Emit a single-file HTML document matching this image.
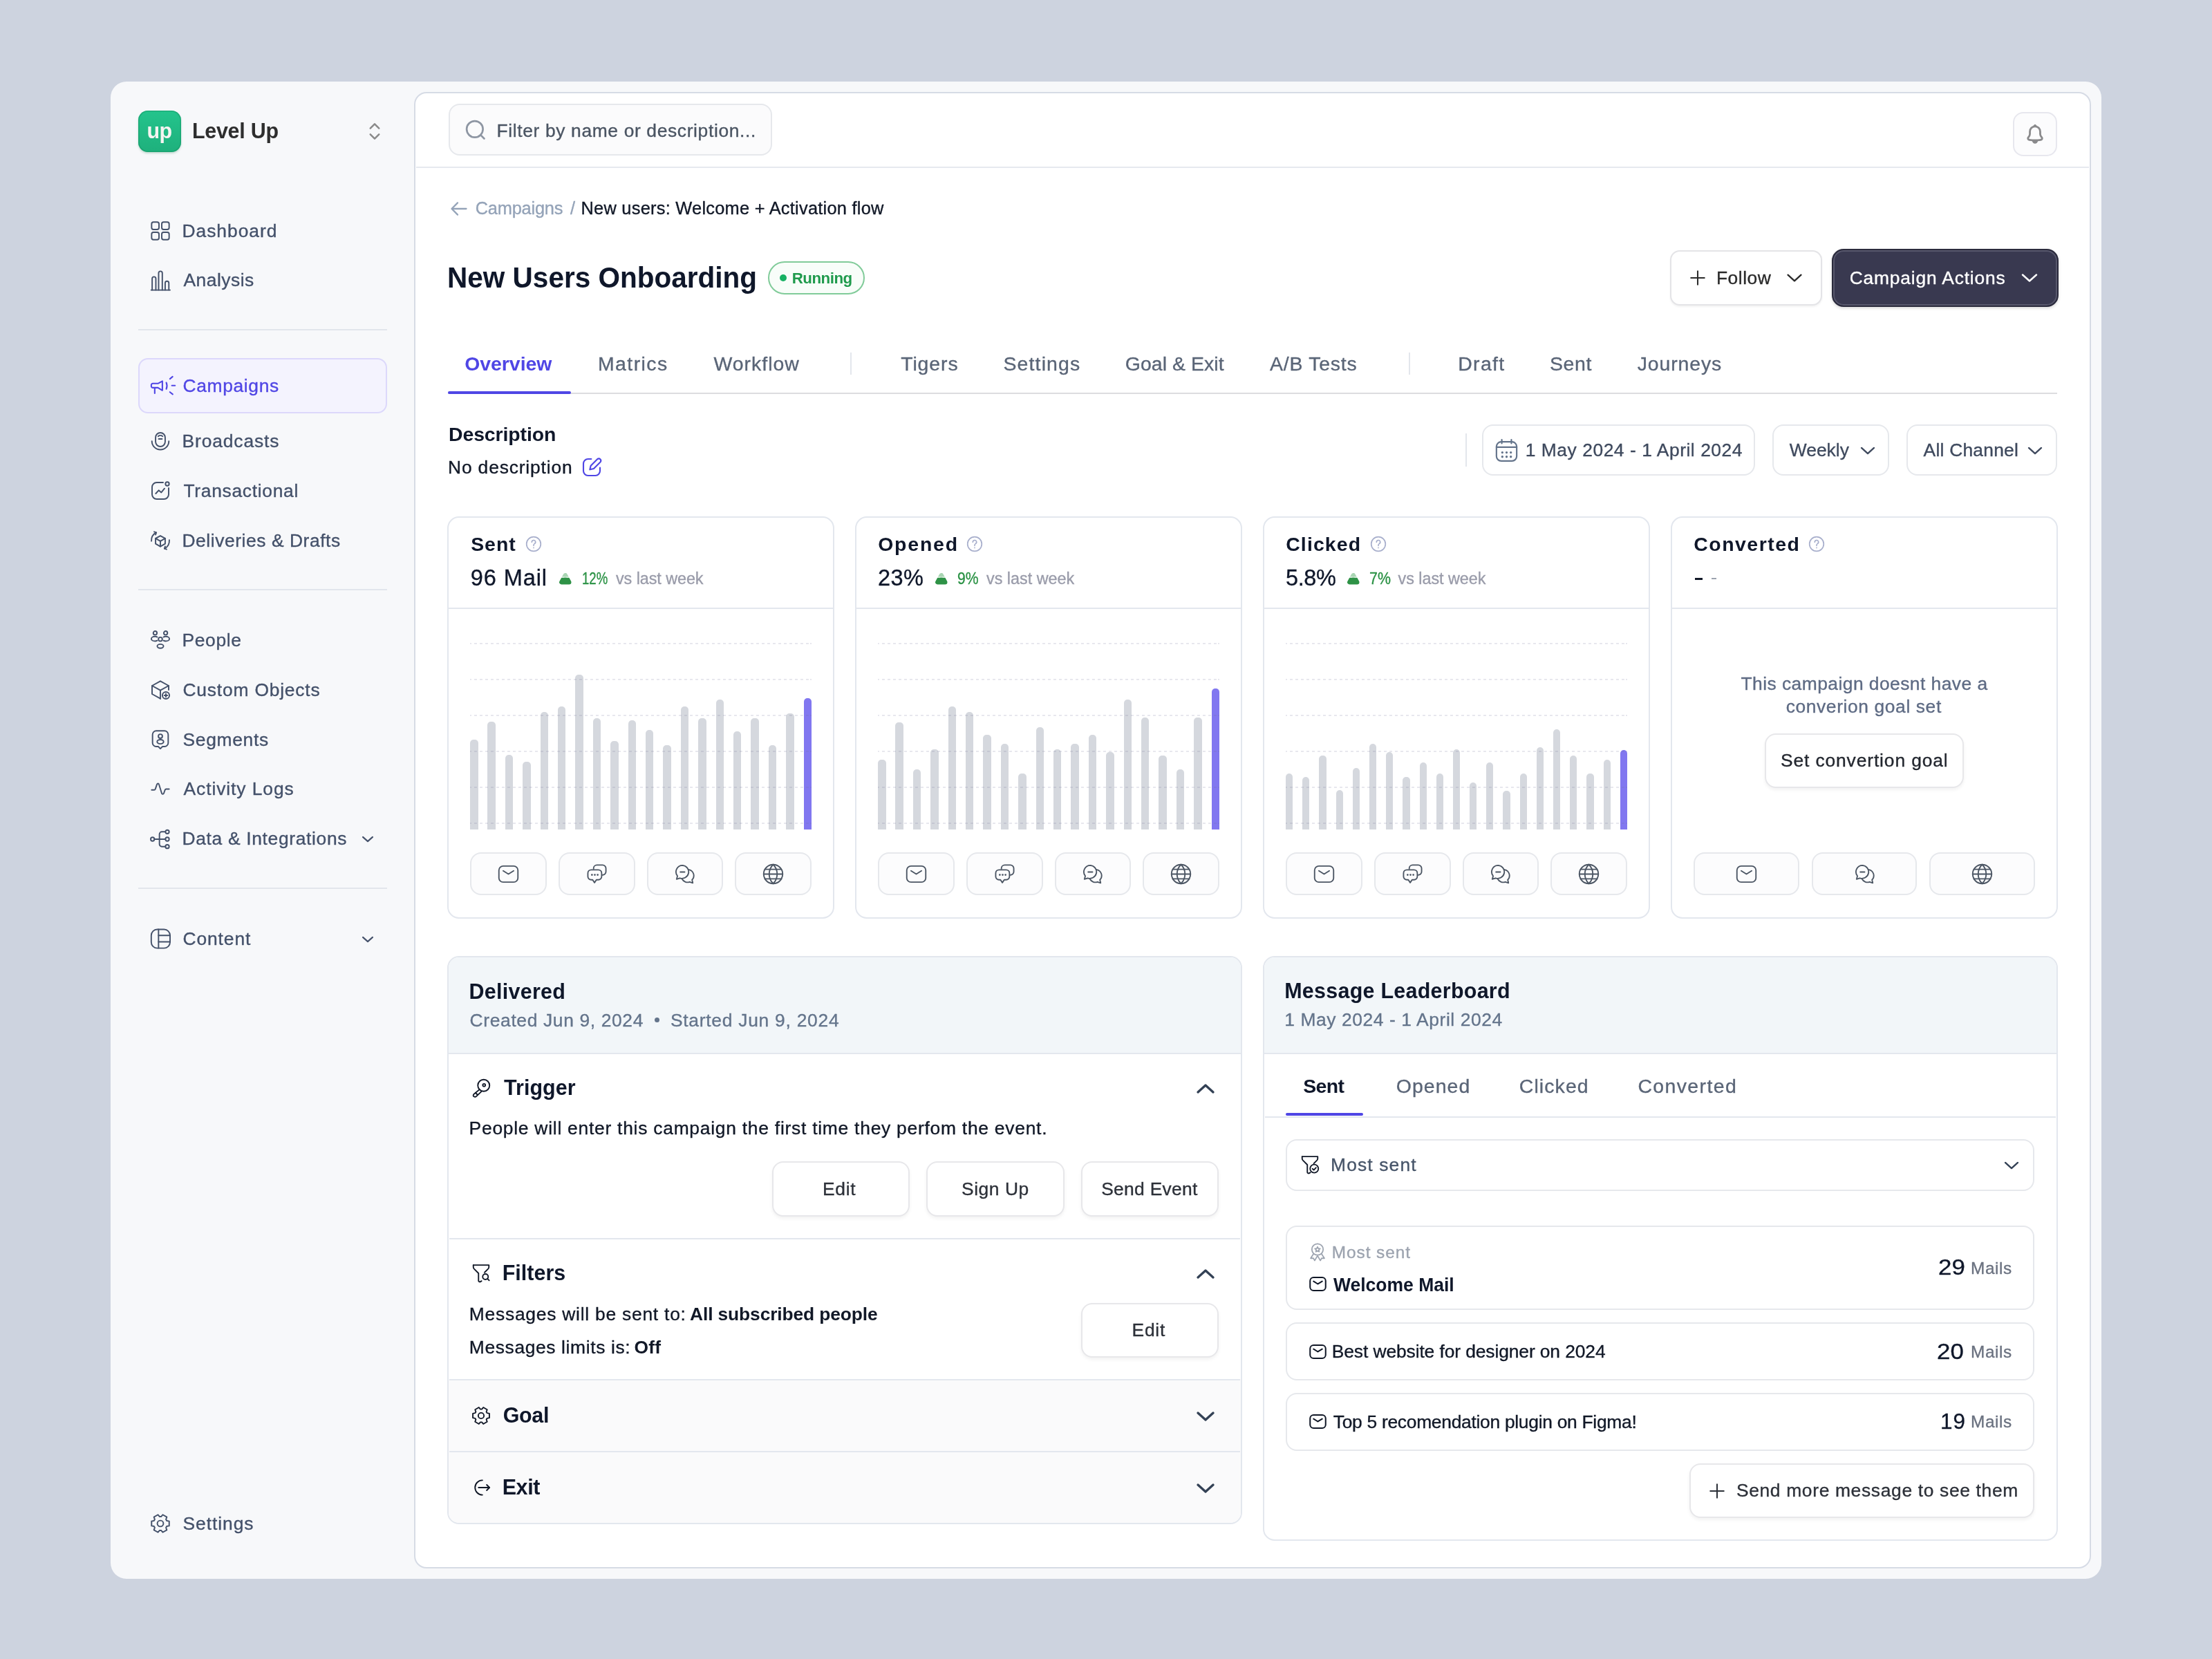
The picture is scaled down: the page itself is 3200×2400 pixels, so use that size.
<!DOCTYPE html><html><head><meta charset="utf-8"><style>html,body{margin:0;padding:0;}
body{width:3200px;height:2400px;background:#cdd3df;position:relative;overflow:hidden;font-family:"Liberation Sans",sans-serif;}
.a{position:absolute;}
.t{white-space:nowrap;-webkit-text-stroke:0.35px currentColor;}
.t[style*="font-weight:700"]{-webkit-text-stroke:0;}
svg.a{overflow:visible;}
#root{position:absolute;left:0;top:0;width:3200px;height:2400px;will-change:transform;}</style></head><body><div id="root">
<div class="a" style="left:160.00px;top:118.00px;width:2880.00px;height:2166.00px;background:#f7f8fa;border-radius:23px;"></div>
<div class="a" style="left:200.00px;top:160.00px;width:62.00px;height:60.00px;background:linear-gradient(#24c48c,#1eb07c);border-radius:14px;box-shadow:0 2px 3px rgba(16,110,70,.22), inset 0 0 0 1.5px rgba(20,150,100,.5);"></div>
<div class="a t" style="left:212.60px;top:171.36px;font-size:30.46px;line-height:36.55px;color:#f6f4f1;font-weight:700;letter-spacing:-0.702px;">up</div>
<div class="a t" style="left:277.90px;top:171.16px;font-size:30.46px;line-height:36.55px;color:#2e2e2e;font-weight:700;letter-spacing:-0.247px;">Level Up</div>
<svg class="a" style="left:527.00px;top:174.50px;" width="30" height="30" viewBox="0 0 24 24" fill="none" stroke="#8a8a8a" stroke-width="2.0" stroke-linecap="round" stroke-linejoin="round"><path d="M7 8.5l5-5 5 5"/><path d="M7 15.5l5 5 5-5"/></svg>
<div class="a" style="left:200.00px;top:476.00px;width:360.00px;height:2.00px;background:#e2e6ec;"></div>
<div class="a" style="left:200.00px;top:851.50px;width:360.00px;height:2.00px;background:#e2e6ec;"></div>
<div class="a" style="left:200.00px;top:1284.00px;width:360.00px;height:2.00px;background:#e2e6ec;"></div>
<div class="a" style="left:200.00px;top:518.00px;width:360.00px;height:80.00px;background:#f4f3fe;border:2px solid #dcd8fb;border-radius:14px;box-sizing:border-box;"></div>
<svg class="a" style="left:215.75px;top:317.75px;" width="32" height="32" viewBox="0 0 24 24" fill="none" stroke="#44516a" stroke-width="1.45" stroke-linecap="round" stroke-linejoin="round"><rect x="2.5" y="2.5" width="8" height="8" rx="2"/><rect x="13.5" y="2.5" width="8" height="8" rx="2"/><rect x="2.5" y="13.5" width="8" height="8" rx="2"/><rect x="13.5" y="13.5" width="8" height="8" rx="2"/></svg>
<div class="a t" style="left:263.50px;top:318.91px;font-size:26.4px;line-height:31.68px;color:#44516a;letter-spacing:0.978px;">Dashboard</div>
<svg class="a" style="left:215.75px;top:389.50px;" width="32" height="32" viewBox="0 0 24 24" fill="none" stroke="#44516a" stroke-width="1.45" stroke-linecap="round" stroke-linejoin="round"><path d="M2 22.2h20.5"/><path d="M3.1 22.2V9.8a2 2 0 0 1 4 0v12.4"/><path d="M10.1 22.2V3.8a2 2 0 0 1 4 0v18.4"/><path d="M17.2 22.2v-7.6a2 2 0 0 1 4 0v7.6"/></svg>
<div class="a t" style="left:265.50px;top:390.01px;font-size:26.4px;line-height:31.68px;color:#44516a;letter-spacing:0.489px;">Analysis</div>
<svg class="a" style="left:217.00px;top:539.00px;" width="37" height="37" viewBox="0 0 24 24" fill="none" stroke="#5046e5" stroke-width="1.36" stroke-linecap="round" stroke-linejoin="round"><path d="M2.6 10.25H7.46L11.6 8v8.74l-4.14-2.54H2.6a1.4 1.4 0 0 1-1.4-1.4v-1.15a1.4 1.4 0 0 1 1.4-1.4z"/><path d="M4.44 14.3v5.1"/><path d="M15.3 9.4q1.3 2.95 0 6"/><path d="M18.7 5.9l2.5-2.1"/><path d="M20.5 12.2h3"/><path d="M18.7 18.3l2.6 2"/></svg>
<div class="a t" style="left:264.50px;top:542.51px;font-size:26.4px;line-height:31.68px;color:#5046e5;letter-spacing:0.651px;">Campaigns</div>
<svg class="a" style="left:215.75px;top:622.00px;" width="32" height="32" viewBox="0 0 24 24" fill="none" stroke="#44516a" stroke-width="1.45" stroke-linecap="round" stroke-linejoin="round"><path d="M6.8 8.2a5.2 5.2 0 0 1 10.4 0v4.6a5.2 5.2 0 0 1-10.4 0z"/><path d="M2.8 12.2a9.2 9.2 0 0 0 18.4 0"/><path d="M9.6 6.9a3.6 3.6 0 0 1 4.8 0"/><path d="M10.2 9.8h3.6"/></svg>
<div class="a t" style="left:263.50px;top:623.01px;font-size:26.4px;line-height:31.68px;color:#44516a;letter-spacing:0.881px;">Broadcasts</div>
<svg class="a" style="left:215.75px;top:694.25px;" width="32" height="32" viewBox="0 0 24 24" fill="none" stroke="#44516a" stroke-width="1.45" stroke-linecap="round" stroke-linejoin="round"><path d="M15 3H8a5 5 0 0 0-5 5v8a5 5 0 0 0 5 5h8a5 5 0 0 0 5-5V9"/><circle cx="19.5" cy="4.5" r="2"/><path d="M7 15l3.2-3.5 2.8 2.3 3.5-4.3"/></svg>
<div class="a t" style="left:265.50px;top:695.01px;font-size:26.4px;line-height:31.68px;color:#44516a;letter-spacing:0.702px;">Transactional</div>
<svg class="a" style="left:215.75px;top:765.90px;" width="32" height="32" viewBox="0 0 24 24" fill="none" stroke="#44516a" stroke-width="1.45" stroke-linecap="round" stroke-linejoin="round"><path d="M12 6.8l5.2 2.9v5.8L12 18.4l-5.2-2.9V9.7z"/><path d="M6.8 9.7l5.2 2.9 5.2-2.9"/><path d="M12 12.6v5.8"/><path d="M2.3 12.5A9.7 9.7 0 0 1 7.5 3.3"/><path d="M5.3 2.5l2.3.8-.8 2.3"/><path d="M21.7 11.5a9.7 9.7 0 0 1-5.2 9.2"/><path d="M18.7 21.5l-2.3-.8.8-2.3"/></svg>
<div class="a t" style="left:263.50px;top:766.76px;font-size:26.4px;line-height:31.68px;color:#44516a;letter-spacing:0.566px;">Deliveries &amp; Drafts</div>
<svg class="a" style="left:215.75px;top:909.60px;" width="32" height="32" viewBox="0 0 24 24" fill="none" stroke="#44516a" stroke-width="1.45" stroke-linecap="round" stroke-linejoin="round"><circle cx="12" cy="11" r="2.1"/><ellipse cx="12" cy="18.6" rx="3.4" ry="2.2"/><circle cx="6.3" cy="4.3" r="2"/><circle cx="17.7" cy="4.3" r="2"/><path d="M8.6 8.7c-.7-.4-1.5-.6-2.4-.6-2.2 0-4 1.1-4 2.5s1.8 2.5 4 2.5c.9 0 1.7-.2 2.4-.6"/><path d="M15.4 8.7c.7-.4 1.5-.6 2.4-.6 2.2 0 4 1.1 4 2.5s-1.8 2.5-4 2.5c-.9 0-1.7-.2-2.4-.6"/></svg>
<div class="a t" style="left:263.50px;top:911.01px;font-size:26.4px;line-height:31.68px;color:#44516a;letter-spacing:0.651px;">People</div>
<svg class="a" style="left:215.75px;top:982.10px;" width="32" height="32" viewBox="0 0 24 24" fill="none" stroke="#44516a" stroke-width="1.45" stroke-linecap="round" stroke-linejoin="round"><path d="M21 12V7.5L12 2.5 3 7.5v9l9 5"/><path d="M3 7.5l9 5 9-5"/><path d="M12 12.5V21.5"/><circle cx="18" cy="18" r="3.8"/><path d="M18 16.3v3.4M16.3 18h3.4"/></svg>
<div class="a t" style="left:264.50px;top:983.01px;font-size:26.4px;line-height:31.68px;color:#44516a;letter-spacing:0.805px;">Custom Objects</div>
<svg class="a" style="left:215.75px;top:1053.60px;" width="32" height="32" viewBox="0 0 24 24" fill="none" stroke="#44516a" stroke-width="1.45" stroke-linecap="round" stroke-linejoin="round"><path d="M3.5 6.5a4 4 0 0 1 4-4h9a4 4 0 0 1 4 4v9a4 4 0 0 1-4 4h-2.2L12 21.8 9.7 19.5H7.5a4 4 0 0 1-4-4z"/><circle cx="12" cy="8.3" r="2.2"/><ellipse cx="12" cy="14.3" rx="3.5" ry="2.3"/></svg>
<div class="a t" style="left:264.50px;top:1054.51px;font-size:26.4px;line-height:31.68px;color:#44516a;letter-spacing:0.696px;">Segments</div>
<svg class="a" style="left:215.75px;top:1125.90px;" width="32" height="32" viewBox="0 0 24 24" fill="none" stroke="#44516a" stroke-width="1.45" stroke-linecap="round" stroke-linejoin="round"><path d="M2.5 12.5h2.8c.6 0 1-.3 1.2-.8l1.8-5.2c.4-1.1 1.9-1.1 2.2 0l3 9.8c.3 1.1 1.8 1.1 2.2 0l1.4-3.9c.2-.5.6-.8 1.1-.8h3.3"/></svg>
<div class="a t" style="left:265.50px;top:1126.01px;font-size:26.4px;line-height:31.68px;color:#44516a;letter-spacing:0.921px;">Activity Logs</div>
<svg class="a" style="left:215.75px;top:1197.75px;" width="32" height="32" viewBox="0 0 24 24" fill="none" stroke="#44516a" stroke-width="1.45" stroke-linecap="round" stroke-linejoin="round"><circle cx="3.5" cy="12" r="2"/><circle cx="19.5" cy="4" r="2"/><circle cx="19.5" cy="12" r="2"/><circle cx="19.5" cy="20" r="2"/><path d="M5.5 12h12"/><path d="M17.5 4h-4a2.5 2.5 0 0 0-2.5 2.5v11A2.5 2.5 0 0 0 13.5 20h4"/></svg>
<div class="a t" style="left:263.50px;top:1198.01px;font-size:26.4px;line-height:31.68px;color:#44516a;letter-spacing:0.668px;">Data &amp; Integrations</div>
<svg class="a" style="left:215.75px;top:1342.00px;" width="32" height="32" viewBox="0 0 24 24" fill="none" stroke="#44516a" stroke-width="1.45" stroke-linecap="round" stroke-linejoin="round"><rect x="2.1" y="1.9" width="20.4" height="20.3" rx="6.5"/><path d="M10 1.9v20.3"/><path d="M10 8.4h12.5M10 15.4h12.5"/></svg>
<div class="a t" style="left:264.50px;top:1342.51px;font-size:26.4px;line-height:31.68px;color:#44516a;letter-spacing:0.900px;">Content</div>
<svg class="a" style="left:215.75px;top:2187.75px;" width="32" height="32" viewBox="0 0 24 24" fill="none" stroke="#44516a" stroke-width="1.45" stroke-linecap="round" stroke-linejoin="round"><circle cx="12" cy="12" r="3.3"/><path d="M18.85 15.05L21.56 14.56L21.56 9.44L18.85 8.95A7.5 7.5 0 0 0 18.07 7.59L19.00 5.00L14.56 2.44L12.78 4.54A7.5 7.5 0 0 0 11.22 4.54L9.44 2.44L5.00 5.00L5.93 7.59A7.5 7.5 0 0 0 5.15 8.95L2.44 9.44L2.44 14.56L5.15 15.05A7.5 7.5 0 0 0 5.93 16.41L5.00 19.00L9.44 21.56L11.22 19.46A7.5 7.5 0 0 0 12.78 19.46L14.56 21.56L19.00 19.00L18.07 16.41A7.5 7.5 0 0 0 18.85 15.05Z"/></svg>
<div class="a t" style="left:264.50px;top:2188.76px;font-size:26.4px;line-height:31.68px;color:#44516a;letter-spacing:0.941px;">Settings</div>
<svg class="a" style="left:518.00px;top:1200.10px;" width="28" height="28" viewBox="0 0 24 24" fill="none" stroke="#44516a" stroke-width="1.8" stroke-linecap="round" stroke-linejoin="round"><path d="M6 9.3l6 5.4 6-5.4"/></svg>
<svg class="a" style="left:518.00px;top:1344.60px;" width="28" height="28" viewBox="0 0 24 24" fill="none" stroke="#44516a" stroke-width="1.8" stroke-linecap="round" stroke-linejoin="round"><path d="M6 9.3l6 5.4 6-5.4"/></svg>
<div class="a" style="left:599.00px;top:133.00px;width:2426.00px;height:2136.00px;background:#fff;border:2px solid #d6dbe5;border-radius:18px;box-sizing:border-box;"></div>
<div class="a" style="left:602.00px;top:241.00px;width:2420.00px;height:2.00px;background:#e6e9ef;"></div>
<div class="a" style="left:649.00px;top:150.00px;width:468.00px;height:75.00px;background:#fbfbfc;border:2px solid #e6e8ec;border-radius:16px;box-sizing:border-box;"></div>
<svg class="a" style="left:670.50px;top:171.00px;" width="34" height="34" viewBox="0 0 24 24" fill="none" stroke="#8e96a3" stroke-width="1.9" stroke-linecap="round" stroke-linejoin="round"><circle cx="11.2" cy="11.2" r="8.3"/><path d="M20.8 20.8l-3.6-3.6"/></svg>
<div class="a t" style="left:718.50px;top:173.76px;font-size:26.4px;line-height:31.68px;color:#4b5563;letter-spacing:0.641px;">Filter by name or description...</div>
<div class="a" style="left:2912.00px;top:162.00px;width:64.00px;height:64.00px;background:#fcfcfd;border:2px solid #e7e7ee;border-radius:15px;box-sizing:border-box;"></div>
<svg class="a" style="left:2928.00px;top:177.50px;color:#8a8a8c;" width="32" height="32" viewBox="0 0 24 24" fill="none" stroke="#8a8a8c" stroke-width="2.1" stroke-linecap="round" stroke-linejoin="round"><path d="M12 3.6c-3.2 0-5.6 2.5-5.6 5.7v2.5c0 1.1-.4 2.2-1.1 3l-.6.7c-.9 1-.3 2.5 1.1 2.7 1.9.3 4 .5 6.2.5s4.3-.2 6.2-.5c1.4-.2 2-1.7 1.1-2.7l-.6-.7c-.7-.8-1.1-1.9-1.1-3V9.3c0-3.2-2.4-5.7-5.6-5.7z"/><path d="M9.9 19.2a2.1 2.1 0 0 0 4.2 0z" fill="currentColor"/><path d="M11 3.4 12 2.5l1 .9z" fill="currentColor"/></svg>
<svg class="a" style="left:650.00px;top:288.00px;" width="28" height="28" viewBox="0 0 24 24" fill="none" stroke="#94a3b8" stroke-width="1.95" stroke-linecap="round" stroke-linejoin="round"><path d="M21 12H3.5"/><path d="M10.3 4.6 3 12l7.3 7.4"/></svg>
<div class="a t" style="left:687.75px;top:286.47px;font-size:25.38px;line-height:30.46px;color:#94a3b8;letter-spacing:-0.208px;">Campaigns</div>
<div class="a t" style="left:825.00px;top:286.47px;font-size:25.38px;line-height:30.46px;color:#94a3b8;">/</div>
<div class="a t" style="left:840.50px;top:286.47px;font-size:25.38px;line-height:30.46px;color:#111827;letter-spacing:0.256px;">New users: Welcome + Activation flow</div>
<div class="a t" style="left:646.85px;top:376.37px;font-size:42.65px;line-height:51.18px;color:#0f172a;transform:scaleX(0.9504);transform-origin:0 0;font-weight:700;">New Users Onboarding</div>
<div class="a" style="left:1111.00px;top:378.00px;width:140.00px;height:48.00px;background:#f8fdf9;border:2px solid #80cb99;border-radius:24px;box-sizing:border-box;"></div>
<div class="a" style="left:1128.00px;top:397.00px;width:10.00px;height:10.00px;background:#17b163;border-radius:50%;"></div>
<div class="a t" style="left:1145.75px;top:390.10px;font-size:22.34px;line-height:26.81px;color:#1f9a4c;font-weight:700;letter-spacing:-0.522px;">Running</div>
<div class="a" style="left:2416.00px;top:362.00px;width:220.00px;height:80.00px;background:#fff;border:2px solid #e4e4e7;border-radius:14px;box-sizing:border-box;box-shadow:0 2px 3px rgba(0,0,0,.05);"></div>
<svg class="a" style="left:2443.00px;top:389.00px;" width="26" height="26" viewBox="0 0 24 24" fill="none" stroke="#2b2b2b" stroke-width="1.9" stroke-linecap="round" stroke-linejoin="round"><path d="M12 3v18M3 12h18"/></svg>
<div class="a t" style="left:2483.00px;top:387.01px;font-size:26.4px;line-height:31.68px;color:#2b2b2b;letter-spacing:0.500px;">Follow</div>
<svg class="a" style="left:2576.50px;top:383.00px;" width="38" height="38" viewBox="0 0 24 24" fill="none" stroke="#2b2b2b" stroke-width="1.5" stroke-linecap="round" stroke-linejoin="round"><path d="M6 9.3l6 5.4 6-5.4"/></svg>
<div class="a" style="left:2650.00px;top:360.00px;width:328.00px;height:84.00px;background:#393950;border:2px solid #2a2a3c;border-radius:17px;box-sizing:border-box;box-shadow:inset 0 0 0 2px #57576c, 0 2px 4px rgba(0,0,0,.15);"></div>
<div class="a t" style="left:2675.70px;top:387.01px;font-size:26.4px;line-height:31.68px;color:#ffffff;letter-spacing:0.822px;">Campaign Actions</div>
<svg class="a" style="left:2916.00px;top:382.00px;" width="40" height="40" viewBox="0 0 24 24" fill="none" stroke="#ffffff" stroke-width="1.5" stroke-linecap="round" stroke-linejoin="round"><path d="M6 9.3l6 5.4 6-5.4"/></svg>
<div class="a t" style="left:672.25px;top:509.08px;font-size:28.43px;line-height:34.12px;color:#4f46e5;font-weight:700;letter-spacing:-0.042px;">Overview</div>
<div class="a t" style="left:865.00px;top:509.08px;font-size:28.43px;line-height:34.12px;color:#5a6577;letter-spacing:1.438px;">Matrics</div>
<div class="a t" style="left:1032.50px;top:509.08px;font-size:28.43px;line-height:34.12px;color:#5a6577;letter-spacing:0.991px;">Workflow</div>
<div class="a t" style="left:1303.20px;top:509.08px;font-size:28.43px;line-height:34.12px;color:#5a6577;letter-spacing:0.900px;">Tigers</div>
<div class="a t" style="left:1451.50px;top:509.08px;font-size:28.43px;line-height:34.12px;color:#5a6577;letter-spacing:1.145px;">Settings</div>
<div class="a t" style="left:1627.75px;top:509.08px;font-size:28.43px;line-height:34.12px;color:#5a6577;letter-spacing:0.073px;">Goal &amp; Exit</div>
<div class="a t" style="left:1837.00px;top:509.08px;font-size:28.43px;line-height:34.12px;color:#5a6577;letter-spacing:0.771px;">A/B Tests</div>
<div class="a t" style="left:2109.25px;top:509.08px;font-size:28.43px;line-height:34.12px;color:#5a6577;letter-spacing:1.327px;">Draft</div>
<div class="a t" style="left:2242.00px;top:509.08px;font-size:28.43px;line-height:34.12px;color:#5a6577;letter-spacing:0.643px;">Sent</div>
<div class="a t" style="left:2368.75px;top:509.08px;font-size:28.43px;line-height:34.12px;color:#5a6577;letter-spacing:0.877px;">Journeys</div>
<div class="a" style="left:648.00px;top:568.00px;width:2328.00px;height:2.00px;background:#dcdcdf;"></div>
<div class="a" style="left:648.00px;top:566.00px;width:178.00px;height:4.00px;background:#4f46e5;border-radius:2px;"></div>
<div class="a" style="left:1230.00px;top:510.00px;width:2.00px;height:32.00px;background:#e3e6ec;"></div>
<div class="a" style="left:2038.00px;top:510.00px;width:2.00px;height:32.00px;background:#e3e6ec;"></div>
<div class="a t" style="left:649.00px;top:610.98px;font-size:28.43px;line-height:34.12px;color:#0f172a;font-weight:700;letter-spacing:-0.099px;">Description</div>
<div class="a t" style="left:648.00px;top:660.81px;font-size:26.4px;line-height:31.68px;color:#111827;letter-spacing:0.845px;">No description</div>
<svg class="a" style="left:840.00px;top:659.50px;" width="32" height="32" viewBox="0 0 24 24" fill="none" stroke="#4f46e5" stroke-width="1.6" stroke-linecap="round" stroke-linejoin="round"><path d="M21 12.5V16a5 5 0 0 1-5 5H8a5 5 0 0 1-5-5V8a5 5 0 0 1 5-5h3.5"/><path d="M18.3 3a2.3 2.3 0 0 1 3.2 3.2l-7.3 7.3-4.2 1 1-4.2z"/></svg>
<div class="a" style="left:2120.00px;top:627.00px;width:2.00px;height:48.00px;background:#e3e6ec;"></div>
<div class="a" style="left:2144.00px;top:614.00px;width:395.00px;height:74.00px;background:#fff;border:2px solid #e6e8ec;border-radius:16px;box-sizing:border-box;"></div>
<div class="a" style="left:2564.00px;top:614.00px;width:169.00px;height:74.00px;background:#fff;border:2px solid #e6e8ec;border-radius:16px;box-sizing:border-box;"></div>
<div class="a" style="left:2758.00px;top:614.00px;width:218.00px;height:74.00px;background:#fff;border:2px solid #e6e8ec;border-radius:16px;box-sizing:border-box;"></div>
<svg class="a" style="left:2161.10px;top:632.50px;" width="37" height="37" viewBox="0 0 24 24" fill="none" stroke="#64748b" stroke-width="1.4" stroke-linecap="round" stroke-linejoin="round"><rect x="2.5" y="4" width="19" height="18" rx="4.5"/><path d="M7.5 2v3.5M16.5 2v3.5M2.5 9h19"/><path d="M8 14h.01M12 14h.01M16 14h.01M8 18h.01M12 18h.01M16 18h.01" stroke-width="2.2"/></svg>
<div class="a t" style="left:2206.75px;top:636.26px;font-size:26.4px;line-height:31.68px;color:#3f4a5e;letter-spacing:0.541px;">1 May 2024 - 1 April 2024</div>
<div class="a t" style="left:2588.80px;top:636.41px;font-size:26.4px;line-height:31.68px;color:#3f4a5e;">Weekly</div>
<svg class="a" style="left:2684.00px;top:633.50px;" width="36" height="36" viewBox="0 0 24 24" fill="none" stroke="#3f4a5e" stroke-width="1.6" stroke-linecap="round" stroke-linejoin="round"><path d="M6 9.3l6 5.4 6-5.4"/></svg>
<div class="a t" style="left:2782.60px;top:636.41px;font-size:26.4px;line-height:31.68px;color:#3f4a5e;letter-spacing:0.229px;">All Channel</div>
<svg class="a" style="left:2926.00px;top:633.50px;" width="36" height="36" viewBox="0 0 24 24" fill="none" stroke="#3f4a5e" stroke-width="1.6" stroke-linecap="round" stroke-linejoin="round"><path d="M6 9.3l6 5.4 6-5.4"/></svg>
<svg width="0" height="0" style="position:absolute"><defs><clipPath id="ctop"><rect x="0" y="0" width="18" height="5.6"/></clipPath><clipPath id="cbot"><rect x="0" y="6.8" width="18" height="12"/></clipPath></defs></svg>
<div class="a" style="left:647.00px;top:747.00px;width:560.00px;height:581.50px;background:#fff;border:2px solid #e3e7ee;border-radius:17px;box-sizing:border-box;"></div>
<div class="a" style="left:649.00px;top:879.00px;width:556.00px;height:2.00px;background:#e3e7ee;"></div>
<div class="a t" style="left:681.20px;top:770.08px;font-size:28.43px;line-height:34.12px;color:#0f172a;font-weight:700;letter-spacing:0.975px;">Sent</div>
<svg class="a" style="left:759.90px;top:775.00px;" width="24" height="24" viewBox="0 0 24 24" fill="none" stroke="#a8afcc" stroke-width="1.7" stroke-linecap="round" stroke-linejoin="round"><circle cx="12" cy="12" r="10.3"/><path d="M9.3 9.3a2.7 2.7 0 1 1 4 2.3c-.8.5-1.3 1-1.3 1.9v.8"/><path d="M12 17.3v.2"/></svg>
<div class="a t" style="left:680.80px;top:817.24px;font-size:32.49px;line-height:38.99px;color:#0f172a;letter-spacing:0.917px;">96 Mail</div>
<svg class="a" style="left:809.20px;top:828.8px" width="17.6" height="16.6" viewBox="0 0 17.6 16.6"><path d="M8.8 3.2 L3.3 13.3 L14.3 13.3 Z" stroke-width="6.4" stroke-linejoin="round" fill="#a9d5b3" stroke="#a9d5b3" clip-path="url(#ctop)"/><path d="M8.8 3.2 L3.3 13.3 L14.3 13.3 Z" stroke-width="6.4" stroke-linejoin="round" fill="#2e9246" stroke="#2e9246" clip-path="url(#cbot)"/></svg>
<div class="a t" style="left:842.40px;top:822.89px;font-size:23.35px;line-height:28.02px;color:#2b9245;transform:scaleX(0.7962);transform-origin:0 0;">12%</div>
<div class="a t" style="left:891.00px;top:822.89px;font-size:23.35px;line-height:28.02px;color:#9a9caa;letter-spacing:-0.060px;">vs last week</div>
<div class="a" style="left:680.00px;top:1070.30px;width:11.50px;height:129.70px;background:#d5d8de;border-radius:5px 5px 0 0;"></div>
<div class="a" style="left:705.39px;top:1044.30px;width:11.50px;height:155.70px;background:#d5d8de;border-radius:5px 5px 0 0;"></div>
<div class="a" style="left:730.79px;top:1092.30px;width:11.50px;height:107.70px;background:#d5d8de;border-radius:5px 5px 0 0;"></div>
<div class="a" style="left:756.18px;top:1102.40px;width:11.50px;height:97.60px;background:#d5d8de;border-radius:5px 5px 0 0;"></div>
<div class="a" style="left:781.58px;top:1030.40px;width:11.50px;height:169.60px;background:#d5d8de;border-radius:5px 5px 0 0;"></div>
<div class="a" style="left:806.97px;top:1022.30px;width:11.50px;height:177.70px;background:#d5d8de;border-radius:5px 5px 0 0;"></div>
<div class="a" style="left:832.37px;top:976.30px;width:11.50px;height:223.70px;background:#d5d8de;border-radius:5px 5px 0 0;"></div>
<div class="a" style="left:857.76px;top:1038.50px;width:11.50px;height:161.50px;background:#d5d8de;border-radius:5px 5px 0 0;"></div>
<div class="a" style="left:883.16px;top:1072.30px;width:11.50px;height:127.70px;background:#d5d8de;border-radius:5px 5px 0 0;"></div>
<div class="a" style="left:908.55px;top:1042.20px;width:11.50px;height:157.80px;background:#d5d8de;border-radius:5px 5px 0 0;"></div>
<div class="a" style="left:933.95px;top:1056.40px;width:11.50px;height:143.60px;background:#d5d8de;border-radius:5px 5px 0 0;"></div>
<div class="a" style="left:959.34px;top:1078.40px;width:11.50px;height:121.60px;background:#d5d8de;border-radius:5px 5px 0 0;"></div>
<div class="a" style="left:984.74px;top:1022.30px;width:11.50px;height:177.70px;background:#d5d8de;border-radius:5px 5px 0 0;"></div>
<div class="a" style="left:1010.13px;top:1038.50px;width:11.50px;height:161.50px;background:#d5d8de;border-radius:5px 5px 0 0;"></div>
<div class="a" style="left:1035.53px;top:1012.40px;width:11.50px;height:187.60px;background:#d5d8de;border-radius:5px 5px 0 0;"></div>
<div class="a" style="left:1060.92px;top:1058.40px;width:11.50px;height:141.60px;background:#d5d8de;border-radius:5px 5px 0 0;"></div>
<div class="a" style="left:1086.32px;top:1038.50px;width:11.50px;height:161.50px;background:#d5d8de;border-radius:5px 5px 0 0;"></div>
<div class="a" style="left:1111.71px;top:1078.40px;width:11.50px;height:121.60px;background:#d5d8de;border-radius:5px 5px 0 0;"></div>
<div class="a" style="left:1137.11px;top:1032.40px;width:11.50px;height:167.60px;background:#d5d8de;border-radius:5px 5px 0 0;"></div>
<div class="a" style="left:1162.50px;top:1010.40px;width:11.50px;height:189.60px;background:#8177f0;border-radius:5px 5px 0 0;"></div>
<div class="a" style="left:680.00px;top:930.00px;width:494.00px;height:2.00px;background-image:repeating-linear-gradient(90deg,rgba(110,110,150,.16) 0 4px,transparent 4px 8px);background-position:-2px 0;"></div>
<div class="a" style="left:680.00px;top:982.00px;width:494.00px;height:2.00px;background-image:repeating-linear-gradient(90deg,rgba(110,110,150,.16) 0 4px,transparent 4px 8px);background-position:-2px 0;"></div>
<div class="a" style="left:680.00px;top:1034.00px;width:494.00px;height:2.00px;background-image:repeating-linear-gradient(90deg,rgba(110,110,150,.16) 0 4px,transparent 4px 8px);background-position:-2px 0;"></div>
<div class="a" style="left:680.00px;top:1086.00px;width:494.00px;height:2.00px;background-image:repeating-linear-gradient(90deg,rgba(110,110,150,.16) 0 4px,transparent 4px 8px);background-position:-2px 0;"></div>
<div class="a" style="left:680.00px;top:1138.00px;width:494.00px;height:2.00px;background-image:repeating-linear-gradient(90deg,rgba(110,110,150,.16) 0 4px,transparent 4px 8px);background-position:-2px 0;"></div>
<div class="a" style="left:680.00px;top:1190.00px;width:494.00px;height:2.00px;background-image:repeating-linear-gradient(90deg,rgba(110,110,150,.16) 0 4px,transparent 4px 8px);background-position:-2px 0;"></div>
<div class="a" style="left:680.00px;top:1233.00px;width:110.75px;height:62.00px;background:#fcfcfd;border:2px solid #e6e8ec;border-radius:16px;box-sizing:border-box;"></div>
<svg class="a" style="left:718.88px;top:1247.50px;" width="33" height="33" viewBox="0 0 24 24" fill="none" stroke="#4b5563" stroke-width="1.35" stroke-linecap="round" stroke-linejoin="round"><rect x="2" y="3.5" width="20" height="17" rx="4.5"/><path d="M6.5 8.5l5.5 3.5 5.5-3.5"/></svg>
<div class="a" style="left:807.75px;top:1233.00px;width:110.75px;height:62.00px;background:#fcfcfd;border:2px solid #e6e8ec;border-radius:16px;box-sizing:border-box;"></div>
<svg class="a" style="left:846.62px;top:1247.50px;" width="33" height="33" viewBox="0 0 24 24" fill="none" stroke="#4b5563" stroke-width="1.35" stroke-linecap="round" stroke-linejoin="round"><path d="M8.5 6.5V6A3.5 3.5 0 0 1 12 2.5h6A3.5 3.5 0 0 1 21.5 6v3.5A3.5 3.5 0 0 1 18 13h-.5"/><path d="M2.5 11a3.5 3.5 0 0 1 3.5-3.5h7.5A3.5 3.5 0 0 1 17 11v3.5a3.5 3.5 0 0 1-3.5 3.5h-2L9.5 21 7.5 18H6a3.5 3.5 0 0 1-3.5-3.5z"/><path d="M6.8 12.8h.01M9.8 12.8h.01M12.8 12.8h.01" stroke-width="2"/></svg>
<div class="a" style="left:935.50px;top:1233.00px;width:110.75px;height:62.00px;background:#fcfcfd;border:2px solid #e6e8ec;border-radius:16px;box-sizing:border-box;"></div>
<svg class="a" style="left:974.38px;top:1247.50px;" width="33" height="33" viewBox="0 0 24 24" fill="none" stroke="#4b5563" stroke-width="1.35" stroke-linecap="round" stroke-linejoin="round"><path d="M9.8 2.8a6.9 6.9 0 0 0-5.4 11.2l-.9 3.4 3.5-1.2a6.9 6.9 0 1 0 2.8-13.4z"/><path d="M7.4 9.8h4.6"/><path d="M16.4 7.3a6.4 6.4 0 0 1 3.4 10.7l.7 3.3-3.3-1.1a6.4 6.4 0 0 1-7.9-2.9"/></svg>
<div class="a" style="left:1063.25px;top:1233.00px;width:110.75px;height:62.00px;background:#fcfcfd;border:2px solid #e6e8ec;border-radius:16px;box-sizing:border-box;"></div>
<svg class="a" style="left:1102.12px;top:1247.50px;" width="33" height="33" viewBox="0 0 24 24" fill="none" stroke="#4b5563" stroke-width="1.35" stroke-linecap="round" stroke-linejoin="round"><circle cx="12" cy="12" r="10"/><path d="M12 2c-2.8 2.7-4.2 6-4.2 10s1.4 7.3 4.2 10M12 2c2.8 2.7 4.2 6 4.2 10s-1.4 7.3-4.2 10"/><path d="M2 12h20M3.3 7h17.4M3.3 17h17.4"/></svg>
<div class="a" style="left:1237.00px;top:747.00px;width:560.00px;height:581.50px;background:#fff;border:2px solid #e3e7ee;border-radius:17px;box-sizing:border-box;"></div>
<div class="a" style="left:1239.00px;top:879.00px;width:556.00px;height:2.00px;background:#e3e7ee;"></div>
<div class="a t" style="left:1270.20px;top:770.08px;font-size:28.43px;line-height:34.12px;color:#0f172a;font-weight:700;letter-spacing:1.811px;">Opened</div>
<svg class="a" style="left:1398.00px;top:775.00px;" width="24" height="24" viewBox="0 0 24 24" fill="none" stroke="#a8afcc" stroke-width="1.7" stroke-linecap="round" stroke-linejoin="round"><circle cx="12" cy="12" r="10.3"/><path d="M9.3 9.3a2.7 2.7 0 1 1 4 2.3c-.8.5-1.3 1-1.3 1.9v.8"/><path d="M12 17.3v.2"/></svg>
<div class="a t" style="left:1269.90px;top:817.24px;font-size:32.49px;line-height:38.99px;color:#0f172a;letter-spacing:0.434px;">23%</div>
<svg class="a" style="left:1353.30px;top:828.8px" width="17.6" height="16.6" viewBox="0 0 17.6 16.6"><path d="M8.8 3.2 L3.3 13.3 L14.3 13.3 Z" stroke-width="6.4" stroke-linejoin="round" fill="#a9d5b3" stroke="#a9d5b3" clip-path="url(#ctop)"/><path d="M8.8 3.2 L3.3 13.3 L14.3 13.3 Z" stroke-width="6.4" stroke-linejoin="round" fill="#2e9246" stroke="#2e9246" clip-path="url(#cbot)"/></svg>
<div class="a t" style="left:1385.30px;top:822.89px;font-size:23.35px;line-height:28.02px;color:#2b9245;transform:scaleX(0.9036);transform-origin:0 0;">9%</div>
<div class="a t" style="left:1427.00px;top:822.89px;font-size:23.35px;line-height:28.02px;color:#9a9caa;">vs last week</div>
<div class="a" style="left:1270.00px;top:1098.70px;width:11.50px;height:101.30px;background:#d5d8de;border-radius:5px 5px 0 0;"></div>
<div class="a" style="left:1295.39px;top:1044.50px;width:11.50px;height:155.50px;background:#d5d8de;border-radius:5px 5px 0 0;"></div>
<div class="a" style="left:1320.79px;top:1112.50px;width:11.50px;height:87.50px;background:#d5d8de;border-radius:5px 5px 0 0;"></div>
<div class="a" style="left:1346.18px;top:1084.20px;width:11.50px;height:115.80px;background:#d5d8de;border-radius:5px 5px 0 0;"></div>
<div class="a" style="left:1371.58px;top:1022.40px;width:11.50px;height:177.60px;background:#d5d8de;border-radius:5px 5px 0 0;"></div>
<div class="a" style="left:1396.97px;top:1030.40px;width:11.50px;height:169.60px;background:#d5d8de;border-radius:5px 5px 0 0;"></div>
<div class="a" style="left:1422.37px;top:1062.50px;width:11.50px;height:137.50px;background:#d5d8de;border-radius:5px 5px 0 0;"></div>
<div class="a" style="left:1447.76px;top:1076.30px;width:11.50px;height:123.70px;background:#d5d8de;border-radius:5px 5px 0 0;"></div>
<div class="a" style="left:1473.16px;top:1118.60px;width:11.50px;height:81.40px;background:#d5d8de;border-radius:5px 5px 0 0;"></div>
<div class="a" style="left:1498.55px;top:1052.40px;width:11.50px;height:147.60px;background:#d5d8de;border-radius:5px 5px 0 0;"></div>
<div class="a" style="left:1523.95px;top:1084.20px;width:11.50px;height:115.80px;background:#d5d8de;border-radius:5px 5px 0 0;"></div>
<div class="a" style="left:1549.34px;top:1076.30px;width:11.50px;height:123.70px;background:#d5d8de;border-radius:5px 5px 0 0;"></div>
<div class="a" style="left:1574.74px;top:1062.50px;width:11.50px;height:137.50px;background:#d5d8de;border-radius:5px 5px 0 0;"></div>
<div class="a" style="left:1600.13px;top:1088.20px;width:11.50px;height:111.80px;background:#d5d8de;border-radius:5px 5px 0 0;"></div>
<div class="a" style="left:1625.53px;top:1012.30px;width:11.50px;height:187.70px;background:#d5d8de;border-radius:5px 5px 0 0;"></div>
<div class="a" style="left:1650.92px;top:1038.30px;width:11.50px;height:161.70px;background:#d5d8de;border-radius:5px 5px 0 0;"></div>
<div class="a" style="left:1676.32px;top:1092.60px;width:11.50px;height:107.40px;background:#d5d8de;border-radius:5px 5px 0 0;"></div>
<div class="a" style="left:1701.71px;top:1112.50px;width:11.50px;height:87.50px;background:#d5d8de;border-radius:5px 5px 0 0;"></div>
<div class="a" style="left:1727.11px;top:1038.30px;width:11.50px;height:161.70px;background:#d5d8de;border-radius:5px 5px 0 0;"></div>
<div class="a" style="left:1752.50px;top:996.40px;width:11.50px;height:203.60px;background:#8177f0;border-radius:5px 5px 0 0;"></div>
<div class="a" style="left:1270.00px;top:930.00px;width:494.00px;height:2.00px;background-image:repeating-linear-gradient(90deg,rgba(110,110,150,.16) 0 4px,transparent 4px 8px);background-position:-2px 0;"></div>
<div class="a" style="left:1270.00px;top:982.00px;width:494.00px;height:2.00px;background-image:repeating-linear-gradient(90deg,rgba(110,110,150,.16) 0 4px,transparent 4px 8px);background-position:-2px 0;"></div>
<div class="a" style="left:1270.00px;top:1034.00px;width:494.00px;height:2.00px;background-image:repeating-linear-gradient(90deg,rgba(110,110,150,.16) 0 4px,transparent 4px 8px);background-position:-2px 0;"></div>
<div class="a" style="left:1270.00px;top:1086.00px;width:494.00px;height:2.00px;background-image:repeating-linear-gradient(90deg,rgba(110,110,150,.16) 0 4px,transparent 4px 8px);background-position:-2px 0;"></div>
<div class="a" style="left:1270.00px;top:1138.00px;width:494.00px;height:2.00px;background-image:repeating-linear-gradient(90deg,rgba(110,110,150,.16) 0 4px,transparent 4px 8px);background-position:-2px 0;"></div>
<div class="a" style="left:1270.00px;top:1190.00px;width:494.00px;height:2.00px;background-image:repeating-linear-gradient(90deg,rgba(110,110,150,.16) 0 4px,transparent 4px 8px);background-position:-2px 0;"></div>
<div class="a" style="left:1270.00px;top:1233.00px;width:110.75px;height:62.00px;background:#fcfcfd;border:2px solid #e6e8ec;border-radius:16px;box-sizing:border-box;"></div>
<svg class="a" style="left:1308.88px;top:1247.50px;" width="33" height="33" viewBox="0 0 24 24" fill="none" stroke="#4b5563" stroke-width="1.35" stroke-linecap="round" stroke-linejoin="round"><rect x="2" y="3.5" width="20" height="17" rx="4.5"/><path d="M6.5 8.5l5.5 3.5 5.5-3.5"/></svg>
<div class="a" style="left:1397.75px;top:1233.00px;width:110.75px;height:62.00px;background:#fcfcfd;border:2px solid #e6e8ec;border-radius:16px;box-sizing:border-box;"></div>
<svg class="a" style="left:1436.62px;top:1247.50px;" width="33" height="33" viewBox="0 0 24 24" fill="none" stroke="#4b5563" stroke-width="1.35" stroke-linecap="round" stroke-linejoin="round"><path d="M8.5 6.5V6A3.5 3.5 0 0 1 12 2.5h6A3.5 3.5 0 0 1 21.5 6v3.5A3.5 3.5 0 0 1 18 13h-.5"/><path d="M2.5 11a3.5 3.5 0 0 1 3.5-3.5h7.5A3.5 3.5 0 0 1 17 11v3.5a3.5 3.5 0 0 1-3.5 3.5h-2L9.5 21 7.5 18H6a3.5 3.5 0 0 1-3.5-3.5z"/><path d="M6.8 12.8h.01M9.8 12.8h.01M12.8 12.8h.01" stroke-width="2"/></svg>
<div class="a" style="left:1525.50px;top:1233.00px;width:110.75px;height:62.00px;background:#fcfcfd;border:2px solid #e6e8ec;border-radius:16px;box-sizing:border-box;"></div>
<svg class="a" style="left:1564.38px;top:1247.50px;" width="33" height="33" viewBox="0 0 24 24" fill="none" stroke="#4b5563" stroke-width="1.35" stroke-linecap="round" stroke-linejoin="round"><path d="M9.8 2.8a6.9 6.9 0 0 0-5.4 11.2l-.9 3.4 3.5-1.2a6.9 6.9 0 1 0 2.8-13.4z"/><path d="M7.4 9.8h4.6"/><path d="M16.4 7.3a6.4 6.4 0 0 1 3.4 10.7l.7 3.3-3.3-1.1a6.4 6.4 0 0 1-7.9-2.9"/></svg>
<div class="a" style="left:1653.25px;top:1233.00px;width:110.75px;height:62.00px;background:#fcfcfd;border:2px solid #e6e8ec;border-radius:16px;box-sizing:border-box;"></div>
<svg class="a" style="left:1692.12px;top:1247.50px;" width="33" height="33" viewBox="0 0 24 24" fill="none" stroke="#4b5563" stroke-width="1.35" stroke-linecap="round" stroke-linejoin="round"><circle cx="12" cy="12" r="10"/><path d="M12 2c-2.8 2.7-4.2 6-4.2 10s1.4 7.3 4.2 10M12 2c2.8 2.7 4.2 6 4.2 10s-1.4 7.3-4.2 10"/><path d="M2 12h20M3.3 7h17.4M3.3 17h17.4"/></svg>
<div class="a" style="left:1827.00px;top:747.00px;width:560.00px;height:581.50px;background:#fff;border:2px solid #e3e7ee;border-radius:17px;box-sizing:border-box;"></div>
<div class="a" style="left:1829.00px;top:879.00px;width:556.00px;height:2.00px;background:#e3e7ee;"></div>
<div class="a t" style="left:1860.20px;top:770.08px;font-size:28.43px;line-height:34.12px;color:#0f172a;font-weight:700;letter-spacing:1.135px;">Clicked</div>
<svg class="a" style="left:1981.75px;top:775.00px;" width="24" height="24" viewBox="0 0 24 24" fill="none" stroke="#a8afcc" stroke-width="1.7" stroke-linecap="round" stroke-linejoin="round"><circle cx="12" cy="12" r="10.3"/><path d="M9.3 9.3a2.7 2.7 0 1 1 4 2.3c-.8.5-1.3 1-1.3 1.9v.8"/><path d="M12 17.3v.2"/></svg>
<div class="a t" style="left:1859.90px;top:817.24px;font-size:32.49px;line-height:38.99px;color:#0f172a;letter-spacing:-0.319px;">5.8%</div>
<svg class="a" style="left:1949.10px;top:828.8px" width="17.6" height="16.6" viewBox="0 0 17.6 16.6"><path d="M8.8 3.2 L3.3 13.3 L14.3 13.3 Z" stroke-width="6.4" stroke-linejoin="round" fill="#a9d5b3" stroke="#a9d5b3" clip-path="url(#ctop)"/><path d="M8.8 3.2 L3.3 13.3 L14.3 13.3 Z" stroke-width="6.4" stroke-linejoin="round" fill="#2e9246" stroke="#2e9246" clip-path="url(#cbot)"/></svg>
<div class="a t" style="left:1980.68px;top:822.89px;font-size:23.35px;line-height:28.02px;color:#2b9245;transform:scaleX(0.9161);transform-origin:0 0;">7%</div>
<div class="a t" style="left:2022.50px;top:822.89px;font-size:23.35px;line-height:28.02px;color:#9a9caa;letter-spacing:-0.015px;">vs last week</div>
<div class="a" style="left:1860.00px;top:1118.60px;width:10.20px;height:81.40px;background:#d5d8de;border-radius:5px 5px 0 0;"></div>
<div class="a" style="left:1884.19px;top:1124.40px;width:10.20px;height:75.60px;background:#d5d8de;border-radius:5px 5px 0 0;"></div>
<div class="a" style="left:1908.38px;top:1092.60px;width:10.20px;height:107.40px;background:#d5d8de;border-radius:5px 5px 0 0;"></div>
<div class="a" style="left:1932.57px;top:1142.50px;width:10.20px;height:57.50px;background:#d5d8de;border-radius:5px 5px 0 0;"></div>
<div class="a" style="left:1956.76px;top:1110.60px;width:10.20px;height:89.40px;background:#d5d8de;border-radius:5px 5px 0 0;"></div>
<div class="a" style="left:1980.95px;top:1076.30px;width:10.20px;height:123.70px;background:#d5d8de;border-radius:5px 5px 0 0;"></div>
<div class="a" style="left:2005.14px;top:1088.20px;width:10.20px;height:111.80px;background:#d5d8de;border-radius:5px 5px 0 0;"></div>
<div class="a" style="left:2029.33px;top:1124.40px;width:10.20px;height:75.60px;background:#d5d8de;border-radius:5px 5px 0 0;"></div>
<div class="a" style="left:2053.52px;top:1102.70px;width:10.20px;height:97.30px;background:#d5d8de;border-radius:5px 5px 0 0;"></div>
<div class="a" style="left:2077.71px;top:1118.60px;width:10.20px;height:81.40px;background:#d5d8de;border-radius:5px 5px 0 0;"></div>
<div class="a" style="left:2101.90px;top:1084.20px;width:10.20px;height:115.80px;background:#d5d8de;border-radius:5px 5px 0 0;"></div>
<div class="a" style="left:2126.09px;top:1132.30px;width:10.20px;height:67.70px;background:#d5d8de;border-radius:5px 5px 0 0;"></div>
<div class="a" style="left:2150.28px;top:1102.70px;width:10.20px;height:97.30px;background:#d5d8de;border-radius:5px 5px 0 0;"></div>
<div class="a" style="left:2174.47px;top:1144.30px;width:10.20px;height:55.70px;background:#d5d8de;border-radius:5px 5px 0 0;"></div>
<div class="a" style="left:2198.66px;top:1118.60px;width:10.20px;height:81.40px;background:#d5d8de;border-radius:5px 5px 0 0;"></div>
<div class="a" style="left:2222.85px;top:1080.60px;width:10.20px;height:119.40px;background:#d5d8de;border-radius:5px 5px 0 0;"></div>
<div class="a" style="left:2247.04px;top:1054.60px;width:10.20px;height:145.40px;background:#d5d8de;border-radius:5px 5px 0 0;"></div>
<div class="a" style="left:2271.23px;top:1092.60px;width:10.20px;height:107.40px;background:#d5d8de;border-radius:5px 5px 0 0;"></div>
<div class="a" style="left:2295.42px;top:1118.60px;width:10.20px;height:81.40px;background:#d5d8de;border-radius:5px 5px 0 0;"></div>
<div class="a" style="left:2319.61px;top:1098.70px;width:10.20px;height:101.30px;background:#d5d8de;border-radius:5px 5px 0 0;"></div>
<div class="a" style="left:2343.80px;top:1084.60px;width:10.20px;height:115.40px;background:#8177f0;border-radius:5px 5px 0 0;"></div>
<div class="a" style="left:1860.00px;top:930.00px;width:494.00px;height:2.00px;background-image:repeating-linear-gradient(90deg,rgba(110,110,150,.16) 0 4px,transparent 4px 8px);background-position:-2px 0;"></div>
<div class="a" style="left:1860.00px;top:982.00px;width:494.00px;height:2.00px;background-image:repeating-linear-gradient(90deg,rgba(110,110,150,.16) 0 4px,transparent 4px 8px);background-position:-2px 0;"></div>
<div class="a" style="left:1860.00px;top:1034.00px;width:494.00px;height:2.00px;background-image:repeating-linear-gradient(90deg,rgba(110,110,150,.16) 0 4px,transparent 4px 8px);background-position:-2px 0;"></div>
<div class="a" style="left:1860.00px;top:1086.00px;width:494.00px;height:2.00px;background-image:repeating-linear-gradient(90deg,rgba(110,110,150,.16) 0 4px,transparent 4px 8px);background-position:-2px 0;"></div>
<div class="a" style="left:1860.00px;top:1138.00px;width:494.00px;height:2.00px;background-image:repeating-linear-gradient(90deg,rgba(110,110,150,.16) 0 4px,transparent 4px 8px);background-position:-2px 0;"></div>
<div class="a" style="left:1860.00px;top:1190.00px;width:494.00px;height:2.00px;background-image:repeating-linear-gradient(90deg,rgba(110,110,150,.16) 0 4px,transparent 4px 8px);background-position:-2px 0;"></div>
<div class="a" style="left:1860.00px;top:1233.00px;width:110.75px;height:62.00px;background:#fcfcfd;border:2px solid #e6e8ec;border-radius:16px;box-sizing:border-box;"></div>
<svg class="a" style="left:1898.88px;top:1247.50px;" width="33" height="33" viewBox="0 0 24 24" fill="none" stroke="#4b5563" stroke-width="1.35" stroke-linecap="round" stroke-linejoin="round"><rect x="2" y="3.5" width="20" height="17" rx="4.5"/><path d="M6.5 8.5l5.5 3.5 5.5-3.5"/></svg>
<div class="a" style="left:1987.75px;top:1233.00px;width:110.75px;height:62.00px;background:#fcfcfd;border:2px solid #e6e8ec;border-radius:16px;box-sizing:border-box;"></div>
<svg class="a" style="left:2026.62px;top:1247.50px;" width="33" height="33" viewBox="0 0 24 24" fill="none" stroke="#4b5563" stroke-width="1.35" stroke-linecap="round" stroke-linejoin="round"><path d="M8.5 6.5V6A3.5 3.5 0 0 1 12 2.5h6A3.5 3.5 0 0 1 21.5 6v3.5A3.5 3.5 0 0 1 18 13h-.5"/><path d="M2.5 11a3.5 3.5 0 0 1 3.5-3.5h7.5A3.5 3.5 0 0 1 17 11v3.5a3.5 3.5 0 0 1-3.5 3.5h-2L9.5 21 7.5 18H6a3.5 3.5 0 0 1-3.5-3.5z"/><path d="M6.8 12.8h.01M9.8 12.8h.01M12.8 12.8h.01" stroke-width="2"/></svg>
<div class="a" style="left:2115.50px;top:1233.00px;width:110.75px;height:62.00px;background:#fcfcfd;border:2px solid #e6e8ec;border-radius:16px;box-sizing:border-box;"></div>
<svg class="a" style="left:2154.38px;top:1247.50px;" width="33" height="33" viewBox="0 0 24 24" fill="none" stroke="#4b5563" stroke-width="1.35" stroke-linecap="round" stroke-linejoin="round"><path d="M9.8 2.8a6.9 6.9 0 0 0-5.4 11.2l-.9 3.4 3.5-1.2a6.9 6.9 0 1 0 2.8-13.4z"/><path d="M7.4 9.8h4.6"/><path d="M16.4 7.3a6.4 6.4 0 0 1 3.4 10.7l.7 3.3-3.3-1.1a6.4 6.4 0 0 1-7.9-2.9"/></svg>
<div class="a" style="left:2243.25px;top:1233.00px;width:110.75px;height:62.00px;background:#fcfcfd;border:2px solid #e6e8ec;border-radius:16px;box-sizing:border-box;"></div>
<svg class="a" style="left:2282.12px;top:1247.50px;" width="33" height="33" viewBox="0 0 24 24" fill="none" stroke="#4b5563" stroke-width="1.35" stroke-linecap="round" stroke-linejoin="round"><circle cx="12" cy="12" r="10"/><path d="M12 2c-2.8 2.7-4.2 6-4.2 10s1.4 7.3 4.2 10M12 2c2.8 2.7 4.2 6 4.2 10s-1.4 7.3-4.2 10"/><path d="M2 12h20M3.3 7h17.4M3.3 17h17.4"/></svg>
<div class="a" style="left:2417.00px;top:747.00px;width:560.00px;height:581.50px;background:#fff;border:2px solid #e3e7ee;border-radius:17px;box-sizing:border-box;"></div>
<div class="a" style="left:2419.00px;top:879.00px;width:556.00px;height:2.00px;background:#e3e7ee;"></div>
<div class="a t" style="left:2450.20px;top:770.08px;font-size:28.43px;line-height:34.12px;color:#0f172a;font-weight:700;letter-spacing:1.526px;">Converted</div>
<svg class="a" style="left:2615.80px;top:775.00px;" width="24" height="24" viewBox="0 0 24 24" fill="none" stroke="#a8afcc" stroke-width="1.7" stroke-linecap="round" stroke-linejoin="round"><circle cx="12" cy="12" r="10.3"/><path d="M9.3 9.3a2.7 2.7 0 1 1 4 2.3c-.8.5-1.3 1-1.3 1.9v.8"/><path d="M12 17.3v.2"/></svg>
<div class="a" style="left:2451.60px;top:835.50px;width:11.40px;height:3.00px;background:#111827;"></div>
<div class="a" style="left:2475.80px;top:836.00px;width:7.60px;height:2.00px;background:#9ca3af;"></div>
<div class="a t" style="left:2518.50px;top:973.51px;font-size:26.4px;line-height:31.68px;color:#5e6b84;letter-spacing:0.455px;">This campaign doesnt have a</div>
<div class="a t" style="left:2583.70px;top:1007.21px;font-size:26.4px;line-height:31.68px;color:#5e6b84;letter-spacing:0.608px;">converion goal set</div>
<div class="a" style="left:2553.00px;top:1061.00px;width:288.00px;height:79.00px;background:#fff;border:2px solid #e7e7ea;border-radius:16px;box-sizing:border-box;box-shadow:0 3px 5px rgba(0,0,0,.05);"></div>
<div class="a t" style="left:2576.00px;top:1084.51px;font-size:26.4px;line-height:31.68px;color:#23272f;letter-spacing:0.874px;">Set convertion goal</div>
<div class="a" style="left:2450.00px;top:1233.00px;width:152.67px;height:62.00px;background:#fcfcfd;border:2px solid #e6e8ec;border-radius:16px;box-sizing:border-box;"></div>
<svg class="a" style="left:2509.83px;top:1247.50px;" width="33" height="33" viewBox="0 0 24 24" fill="none" stroke="#4b5563" stroke-width="1.35" stroke-linecap="round" stroke-linejoin="round"><rect x="2" y="3.5" width="20" height="17" rx="4.5"/><path d="M6.5 8.5l5.5 3.5 5.5-3.5"/></svg>
<div class="a" style="left:2620.67px;top:1233.00px;width:152.67px;height:62.00px;background:#fcfcfd;border:2px solid #e6e8ec;border-radius:16px;box-sizing:border-box;"></div>
<svg class="a" style="left:2680.50px;top:1247.50px;" width="33" height="33" viewBox="0 0 24 24" fill="none" stroke="#4b5563" stroke-width="1.35" stroke-linecap="round" stroke-linejoin="round"><path d="M9.8 2.8a6.9 6.9 0 0 0-5.4 11.2l-.9 3.4 3.5-1.2a6.9 6.9 0 1 0 2.8-13.4z"/><path d="M7.4 9.8h4.6"/><path d="M16.4 7.3a6.4 6.4 0 0 1 3.4 10.7l.7 3.3-3.3-1.1a6.4 6.4 0 0 1-7.9-2.9"/></svg>
<div class="a" style="left:2791.33px;top:1233.00px;width:152.67px;height:62.00px;background:#fcfcfd;border:2px solid #e6e8ec;border-radius:16px;box-sizing:border-box;"></div>
<svg class="a" style="left:2851.17px;top:1247.50px;" width="33" height="33" viewBox="0 0 24 24" fill="none" stroke="#4b5563" stroke-width="1.35" stroke-linecap="round" stroke-linejoin="round"><circle cx="12" cy="12" r="10"/><path d="M12 2c-2.8 2.7-4.2 6-4.2 10s1.4 7.3 4.2 10M12 2c2.8 2.7 4.2 6 4.2 10s-1.4 7.3-4.2 10"/><path d="M2 12h20M3.3 7h17.4M3.3 17h17.4"/></svg>
<div class="a" style="left:647.00px;top:1383.00px;width:1150.00px;height:822.00px;background:#fff;border:2px solid #e3e7ee;border-radius:17px;box-sizing:border-box;overflow:hidden;"><div style="position:absolute;left:0;top:0;right:0;height:138px;background:#f2f6f9;border-bottom:2px solid #e3e7ee"></div><div style="position:absolute;left:0;top:610px;right:0;bottom:0;background:#fafafb;"></div></div>
<div class="a" style="left:650.00px;top:1791.00px;width:1144.00px;height:2.00px;background:#e3e7ee;"></div>
<div class="a" style="left:650.00px;top:1995.00px;width:1144.00px;height:2.00px;background:#e3e7ee;"></div>
<div class="a" style="left:650.00px;top:2099.00px;width:1144.00px;height:2.00px;background:#e3e7ee;"></div>
<div class="a t" style="left:678.60px;top:1415.86px;font-size:30.46px;line-height:36.55px;color:#0f172a;font-weight:700;letter-spacing:0.261px;">Delivered</div>
<div class="a t" style="left:679.60px;top:1460.91px;font-size:26.4px;line-height:31.68px;color:#64748b;letter-spacing:0.646px;">Created Jun 9, 2024</div>
<div class="a" style="left:947.20px;top:1472.20px;width:7.00px;height:7.00px;background:#64748b;border-radius:50%;"></div>
<div class="a t" style="left:969.90px;top:1460.91px;font-size:26.4px;line-height:31.68px;color:#64748b;letter-spacing:0.740px;">Started Jun 9, 2024</div>
<svg class="a" style="left:681.00px;top:1559.00px;" width="30" height="30" viewBox="0 0 24 24" fill="none" stroke="#111827" stroke-width="1.5" stroke-linecap="round" stroke-linejoin="round"><circle cx="15" cy="9" r="6.8"/><circle cx="15.4" cy="8.6" r="1.5"/><path d="M10.1 13.7 L3.5 19.2 Q2 21.3 4.3 22.1 Q5.6 22.5 6.6 21.5 L12.5 15.9"/><path d="M5.6 17.6 L7.6 19.6"/></svg>
<div class="a t" style="left:729.10px;top:1555.16px;font-size:30.46px;line-height:36.55px;color:#0f172a;font-weight:700;letter-spacing:0.038px;">Trigger</div>
<svg class="a" style="left:1722.00px;top:1553.00px;" width="44" height="44" viewBox="0 0 24 24" fill="none" stroke="#334155" stroke-width="1.85" stroke-linecap="round" stroke-linejoin="round"><path d="M6 14.7l6-5.4 6 5.4"/></svg>
<div class="a t" style="left:678.60px;top:1616.81px;font-size:26.4px;line-height:31.68px;color:#111827;letter-spacing:0.752px;">People will enter this campaign the first time they perfom the event.</div>
<div class="a" style="left:1117.00px;top:1680.00px;width:199.00px;height:80.00px;background:#fff;border:2px solid #e7e7ea;border-radius:16px;box-sizing:border-box;box-shadow:0 3px 5px rgba(0,0,0,.05);"></div>
<div class="a t" style="left:1190.00px;top:1705.31px;font-size:26.4px;line-height:31.68px;color:#2d3139;letter-spacing:0.686px;">Edit</div>
<div class="a" style="left:1340.00px;top:1680.00px;width:200.00px;height:80.00px;background:#fff;border:2px solid #e7e7ea;border-radius:16px;box-sizing:border-box;box-shadow:0 3px 5px rgba(0,0,0,.05);"></div>
<div class="a t" style="left:1391.10px;top:1705.31px;font-size:26.4px;line-height:31.68px;color:#2d3139;letter-spacing:0.532px;">Sign Up</div>
<div class="a" style="left:1564.00px;top:1680.00px;width:199.00px;height:80.00px;background:#fff;border:2px solid #e7e7ea;border-radius:16px;box-sizing:border-box;box-shadow:0 3px 5px rgba(0,0,0,.05);"></div>
<div class="a t" style="left:1593.20px;top:1705.31px;font-size:26.4px;line-height:31.68px;color:#2d3139;letter-spacing:0.298px;">Send Event</div>
<svg class="a" style="left:680.70px;top:1827.00px;" width="30" height="30" viewBox="0 0 24 24" fill="none" stroke="#111827" stroke-width="1.5" stroke-linecap="round" stroke-linejoin="round"><path d="M3 2.5h18v2.2a3 3 0 0 1-.9 2.2L16 11"/><path d="M3 2.5v2.2a3 3 0 0 0 .9 2.2L9 12v8.5a1.5 1.5 0 0 0 2.3 1.2l1.2-.8"/><circle cx="17" cy="16" r="3.2"/><path d="M19.3 18.3l2 2"/></svg>
<div class="a t" style="left:726.70px;top:1823.06px;font-size:30.46px;line-height:36.55px;color:#0f172a;font-weight:700;letter-spacing:0.025px;">Filters</div>
<svg class="a" style="left:1722.00px;top:1820.50px;" width="44" height="44" viewBox="0 0 24 24" fill="none" stroke="#334155" stroke-width="1.85" stroke-linecap="round" stroke-linejoin="round"><path d="M6 14.7l6-5.4 6 5.4"/></svg>
<div class="a t" style="left:678.80px;top:1885.51px;font-size:26.4px;line-height:31.68px;color:#111827;letter-spacing:0.762px;">Messages will be sent to:</div>
<div class="a t" style="left:998.00px;top:1885.51px;font-size:26.4px;line-height:31.68px;color:#111827;font-weight:700;letter-spacing:-0.128px;">All subscribed people</div>
<div class="a t" style="left:678.80px;top:1934.01px;font-size:26.4px;line-height:31.68px;color:#111827;letter-spacing:0.633px;">Messages limits is:</div>
<div class="a t" style="left:917.40px;top:1934.01px;font-size:26.4px;line-height:31.68px;color:#111827;font-weight:700;letter-spacing:0.242px;">Off</div>
<div class="a" style="left:1564.00px;top:1885.00px;width:199.00px;height:79.00px;background:#fff;border:2px solid #e7e7ea;border-radius:16px;box-sizing:border-box;box-shadow:0 3px 5px rgba(0,0,0,.05);"></div>
<div class="a t" style="left:1637.50px;top:1909.01px;font-size:26.4px;line-height:31.68px;color:#2d3139;letter-spacing:0.786px;">Edit</div>
<svg class="a" style="left:681.00px;top:2033.40px;" width="30" height="30" viewBox="0 0 24 24" fill="none" stroke="#111827" stroke-width="1.5" stroke-linecap="round" stroke-linejoin="round"><circle cx="12" cy="12" r="3.3"/><path d="M18.85 15.05L21.56 14.56L21.56 9.44L18.85 8.95A7.5 7.5 0 0 0 18.07 7.59L19.00 5.00L14.56 2.44L12.78 4.54A7.5 7.5 0 0 0 11.22 4.54L9.44 2.44L5.00 5.00L5.93 7.59A7.5 7.5 0 0 0 5.15 8.95L2.44 9.44L2.44 14.56L5.15 15.05A7.5 7.5 0 0 0 5.93 16.41L5.00 19.00L9.44 21.56L11.22 19.46A7.5 7.5 0 0 0 12.78 19.46L14.56 21.56L19.00 19.00L18.07 16.41A7.5 7.5 0 0 0 18.85 15.05Z"/></svg>
<div class="a t" style="left:727.70px;top:2028.86px;font-size:30.46px;line-height:36.55px;color:#0f172a;font-weight:700;letter-spacing:-0.342px;">Goal</div>
<svg class="a" style="left:1722.00px;top:2027.00px;" width="44" height="44" viewBox="0 0 24 24" fill="none" stroke="#334155" stroke-width="1.85" stroke-linecap="round" stroke-linejoin="round"><path d="M6 9.3l6 5.4 6-5.4"/></svg>
<svg class="a" style="left:681.00px;top:2137.00px;" width="30" height="30" viewBox="0 0 24 24" fill="none" stroke="#111827" stroke-width="1.5" stroke-linecap="round" stroke-linejoin="round"><path d="M13.5 3.5a8.5 8.5 0 1 0 0 17"/><path d="M9 12h12.5"/><path d="M18.5 8.8L21.7 12l-3.2 3.2"/></svg>
<div class="a t" style="left:726.70px;top:2132.56px;font-size:30.46px;line-height:36.55px;color:#0f172a;font-weight:700;letter-spacing:-0.403px;">Exit</div>
<svg class="a" style="left:1722.00px;top:2131.00px;" width="44" height="44" viewBox="0 0 24 24" fill="none" stroke="#334155" stroke-width="1.85" stroke-linecap="round" stroke-linejoin="round"><path d="M6 9.3l6 5.4 6-5.4"/></svg>
<div class="a" style="left:1827.00px;top:1383.00px;width:1150.00px;height:846.00px;background:#fff;border:2px solid #e3e7ee;border-radius:17px;box-sizing:border-box;overflow:hidden;"><div style="position:absolute;left:0;top:0;right:0;height:138px;background:#f2f6f9;border-bottom:2px solid #e3e7ee"></div></div>
<div class="a t" style="left:1858.20px;top:1415.46px;font-size:30.46px;line-height:36.55px;color:#0f172a;font-weight:700;letter-spacing:0.268px;">Message Leaderboard</div>
<div class="a t" style="left:1858.20px;top:1460.41px;font-size:26.4px;line-height:31.68px;color:#64748b;letter-spacing:0.595px;">1 May 2024 - 1 April 2024</div>
<div class="a" style="left:1830.00px;top:1615.00px;width:1144.00px;height:2.00px;background:#e3e7ee;"></div>
<div class="a t" style="left:1885.30px;top:1553.88px;font-size:28.43px;line-height:34.12px;color:#0f172a;font-weight:700;letter-spacing:-0.642px;">Sent</div>
<div class="a t" style="left:2019.80px;top:1553.88px;font-size:28.43px;line-height:34.12px;color:#5a6577;letter-spacing:1.073px;">Opened</div>
<div class="a t" style="left:2197.80px;top:1553.88px;font-size:28.43px;line-height:34.12px;color:#5a6577;letter-spacing:1.103px;">Clicked</div>
<div class="a t" style="left:2369.40px;top:1553.88px;font-size:28.43px;line-height:34.12px;color:#5a6577;letter-spacing:1.397px;">Converted</div>
<div class="a" style="left:1860.00px;top:1610.00px;width:112.00px;height:4.00px;background:#4f46e5;border-radius:2px;"></div>
<div class="a" style="left:1860.00px;top:1648.00px;width:1083.00px;height:75.00px;background:#fff;border:2px solid #e6e8ec;border-radius:16px;box-sizing:border-box;"></div>
<svg class="a" style="left:1879.50px;top:1670.00px;" width="30" height="30" viewBox="0 0 24 24" fill="none" stroke="#111827" stroke-width="1.5" stroke-linecap="round" stroke-linejoin="round"><path d="M3 2.5h18v2.2a3 3 0 0 1-.9 2.2L16.5 10.5"/><path d="M3 2.5v2.2a3 3 0 0 0 .9 2.2L9 12v8.5a1.5 1.5 0 0 0 2.3 1.2l1.2-.8"/><circle cx="17" cy="16.5" r="4.8"/><path d="M15 16.6l1.5 1.5 2.6-2.8"/></svg>
<div class="a t" style="left:1925.10px;top:1670.21px;font-size:26.4px;line-height:31.68px;color:#475569;letter-spacing:1.129px;">Most sent</div>
<svg class="a" style="left:2892.00px;top:1668.00px;" width="36" height="36" viewBox="0 0 24 24" fill="none" stroke="#334155" stroke-width="1.6" stroke-linecap="round" stroke-linejoin="round"><path d="M6 9.3l6 5.4 6-5.4"/></svg>
<div class="a" style="left:1860.00px;top:1773.00px;width:1083.00px;height:122.00px;background:#fff;border:2px solid #e6e8ec;border-radius:16px;box-sizing:border-box;"></div>
<svg class="a" style="left:1892.00px;top:1797.00px;" width="28" height="28" viewBox="0 0 24 24" fill="none" stroke="#9ca3af" stroke-width="1.5" stroke-linecap="round" stroke-linejoin="round"><circle cx="12" cy="9" r="7"/><path d="M12 5.8l1 2 2.2.3-1.6 1.5.4 2.2-2-1-2 1 .4-2.2-1.6-1.5 2.2-.3z"/><path d="M7 14.5L3.5 20l3.3-.2 1.7 3 3.2-5.5"/><path d="M17 14.5l3.5 5.5-3.3-.2-1.7 3-3.2-5.5"/></svg>
<div class="a t" style="left:1926.80px;top:1796.93px;font-size:24.37px;line-height:29.24px;color:#9ca3af;letter-spacing:0.946px;">Most sent</div>
<svg class="a" style="left:1892.50px;top:1844.10px;" width="27" height="27" viewBox="0 0 24 24" fill="none" stroke="#111827" stroke-width="1.8" stroke-linecap="round" stroke-linejoin="round"><rect x="2" y="3.5" width="20" height="17" rx="4.5"/><path d="M6.5 8.5l5.5 3.5 5.5-3.5"/></svg>
<div class="a t" style="left:1928.80px;top:1840.88px;font-size:28.43px;line-height:34.12px;color:#0f172a;transform:scaleX(0.9319);transform-origin:0 0;font-weight:700;">Welcome Mail</div>
<div class="a t" style="left:2804.19px;top:1814.60px;font-size:31.48px;line-height:37.78px;color:#0f172a;transform:scaleX(1.1074);transform-origin:0 0;">29</div>
<div class="a t" style="left:2851.10px;top:1820.43px;font-size:24.37px;line-height:29.24px;color:#6b7280;letter-spacing:0.559px;">Mails</div>
<div class="a" style="left:1860.00px;top:1913.00px;width:1083.00px;height:84.00px;background:#fff;border:2px solid #e6e8ec;border-radius:16px;box-sizing:border-box;"></div>
<svg class="a" style="left:1892.50px;top:1941.80px;" width="27" height="27" viewBox="0 0 24 24" fill="none" stroke="#111827" stroke-width="1.8" stroke-linecap="round" stroke-linejoin="round"><rect x="2" y="3.5" width="20" height="17" rx="4.5"/><path d="M6.5 8.5l5.5 3.5 5.5-3.5"/></svg>
<div class="a t" style="left:1926.80px;top:1940.31px;font-size:26.4px;line-height:31.68px;color:#111827;letter-spacing:-0.102px;-webkit-text-stroke:0.35px #111827;">Best website for designer on 2024</div>
<div class="a t" style="left:2802.49px;top:1936.50px;font-size:31.48px;line-height:37.78px;color:#0f172a;transform:scaleX(1.1074);transform-origin:0 0;">20</div>
<div class="a t" style="left:2851.10px;top:1940.73px;font-size:24.37px;line-height:29.24px;color:#6b7280;letter-spacing:0.559px;">Mails</div>
<div class="a" style="left:1860.00px;top:2015.00px;width:1083.00px;height:84.00px;background:#fff;border:2px solid #e6e8ec;border-radius:16px;box-sizing:border-box;"></div>
<svg class="a" style="left:1892.50px;top:2043.20px;" width="27" height="27" viewBox="0 0 24 24" fill="none" stroke="#111827" stroke-width="1.8" stroke-linecap="round" stroke-linejoin="round"><rect x="2" y="3.5" width="20" height="17" rx="4.5"/><path d="M6.5 8.5l5.5 3.5 5.5-3.5"/></svg>
<div class="a t" style="left:1928.80px;top:2041.71px;font-size:26.4px;line-height:31.68px;color:#111827;letter-spacing:-0.285px;-webkit-text-stroke:0.35px #111827;">Top 5 recomendation plugin on Figma!</div>
<div class="a t" style="left:2807.00px;top:2037.90px;font-size:31.48px;line-height:37.78px;color:#0f172a;letter-spacing:0.899px;">19</div>
<div class="a t" style="left:2851.10px;top:2042.13px;font-size:24.37px;line-height:29.24px;color:#6b7280;letter-spacing:0.559px;">Mails</div>
<div class="a" style="left:2444.00px;top:2117.00px;width:499.00px;height:79.00px;background:#fff;border:2px solid #e7e7ea;border-radius:16px;box-sizing:border-box;box-shadow:0 3px 5px rgba(0,0,0,.05);"></div>
<svg class="a" style="left:2471.00px;top:2143.50px;" width="26" height="26" viewBox="0 0 24 24" fill="none" stroke="#2d3139" stroke-width="1.9" stroke-linecap="round" stroke-linejoin="round"><path d="M12 3v18M3 12h18"/></svg>
<div class="a t" style="left:2511.90px;top:2141.01px;font-size:26.4px;line-height:31.68px;color:#2d3139;letter-spacing:0.666px;">Send more message to see them</div>
</div></body></html>
